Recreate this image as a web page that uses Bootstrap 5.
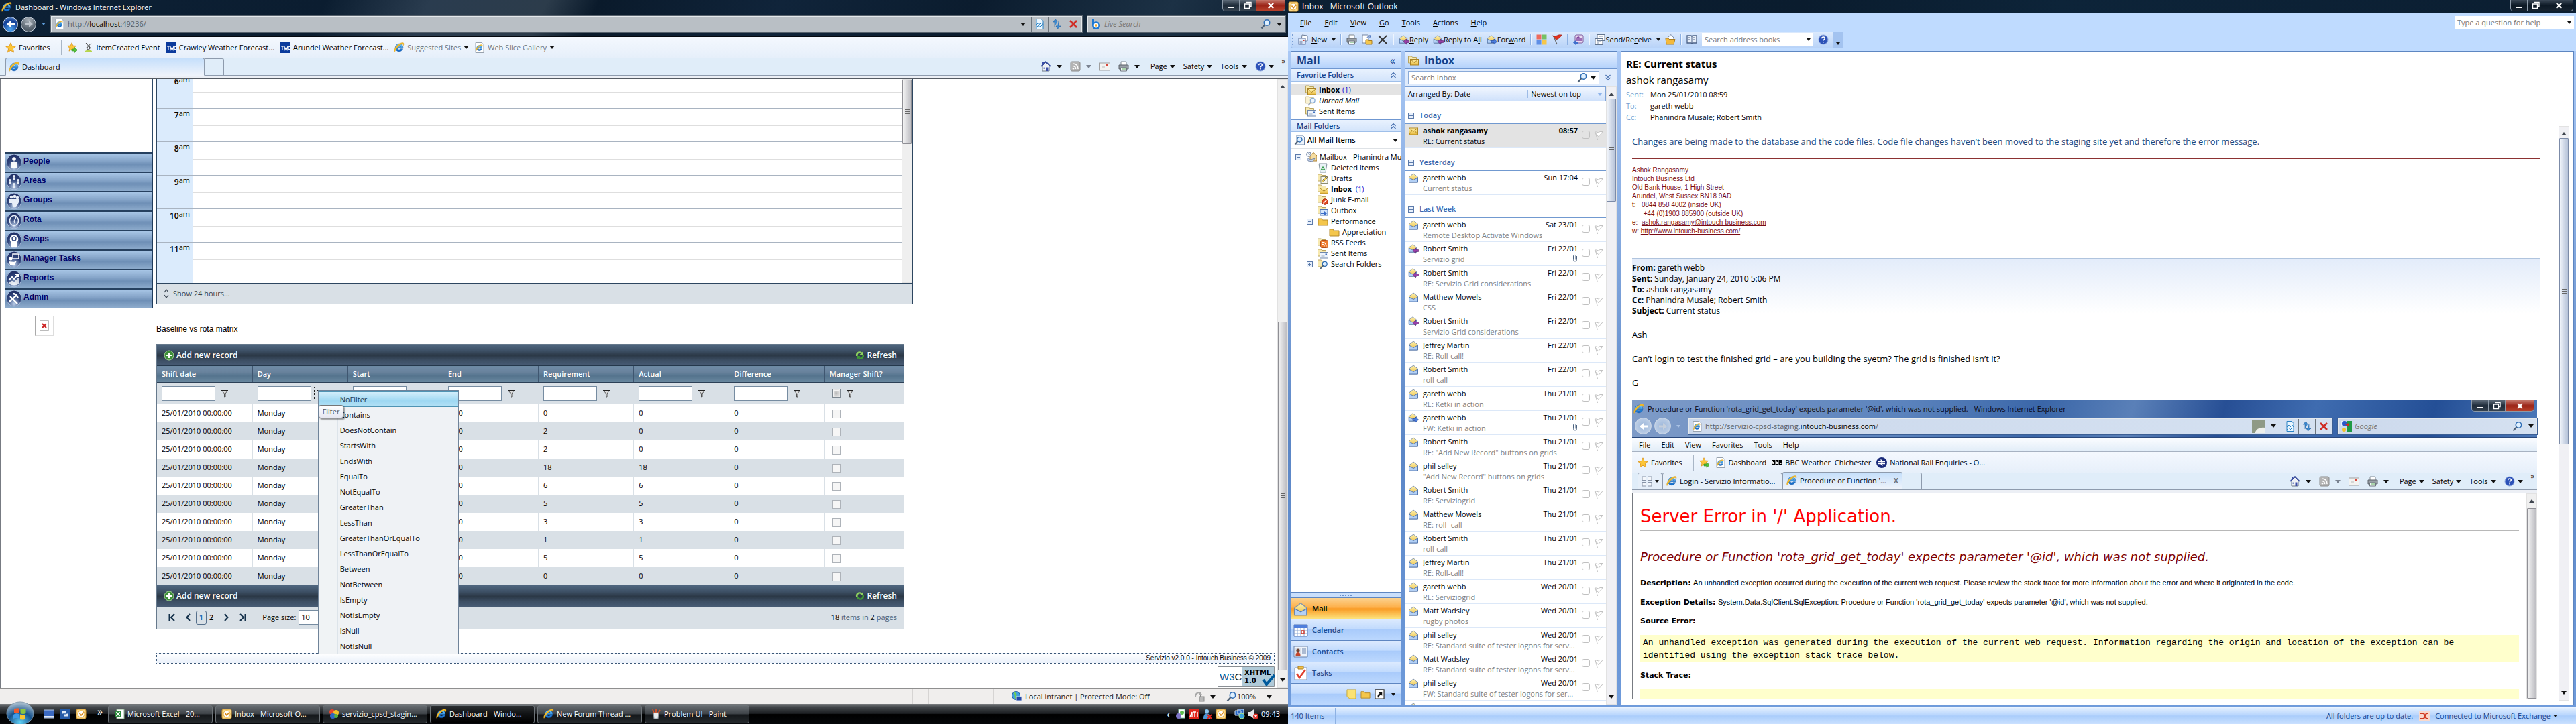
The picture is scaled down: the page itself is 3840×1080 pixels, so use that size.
<!DOCTYPE html>
<html lang="en">
<head>
<meta charset="utf-8">
<title>Desktop</title>
<meta name="viewport" content="width=device-width, initial-scale=1">
<link href="https://cdn.jsdelivr.net/npm/bootstrap@5.3.0/dist/css/bootstrap.min.css" rel="stylesheet">
<style>
  body{font:11px/16px "Open Sans","Noto Sans",sans-serif;color:#000;background:#fff;overflow:hidden}
  button,input,select{font:inherit;color:inherit}
  button,.tb{background:none;border:0;padding:0;display:inline-flex;align-items:center;white-space:nowrap;color:inherit;text-decoration:none}
  input{border-radius:0;min-width:0}
  input::placeholder{color:#777;opacity:1}
  .ic{width:16px;height:16px;flex:none;overflow:visible}
  .car{width:0;height:0;flex:none;border:4px solid transparent;border-top:5px solid #111;border-bottom:0}
  .car.dim{border-top-color:#7a8290}
  .car.sm{border-width:3px;border-top-width:4px;border-bottom:0}
  .carup{width:0;height:0;border:4px solid transparent;border-bottom:5px solid #40464f;border-top:0}
  .vsep{width:1px;align-self:stretch;flex:none}
  .clip{overflow:hidden;white-space:nowrap;text-overflow:ellipsis}
  .arial{font-family:"Liberation Sans",Arial,sans-serif}
  .verd{font-family:"DejaVu Sans",Verdana,sans-serif}
  .pane{min-width:0;min-height:0}

  /* glass title area */
  .chrome{background:linear-gradient(115deg,#0d2136 0,#0b1d30 25%,#2a3c4f 33%,#2c3c4b 42%,#0a1a2b 46%,#10243a 60%,#0b1c2e 75%,#1c3145 90%,#0d1f31 100%);height:55px;border-bottom:2px solid #05090f}
  .ttl{height:24px;color:#fff;gap:5px;padding-left:2px;padding-top:3px}
  .wctl{height:17px;border:1px solid #8d9aa8;border-top:0;border-radius:0 0 5px 5px;overflow:hidden;align-self:flex-start}
  .wctl button{width:25px;justify-content:center;background:linear-gradient(#5d6a78,#1e2b39 50%,#35424f);border-right:1px solid #8d9aa8}
  .wctl button:last-child{width:42px;border:0;background:linear-gradient(#c4776b,#9b2417 50%,#b8412b)}
  .addr{height:24px;background:#b9bfc5;border:1px solid #e5e9ec;outline:1px solid #56616c;color:#5a6066}
  .addr .gobtn{width:25px;height:22px;justify-content:center;border-left:1px solid #6d757d}
  .orb{width:23px;height:23px;border-radius:50%;border:1px solid #cfd9e6;justify-content:center}
  .orb.back{background:radial-gradient(circle at 50% 85%,#4fa5f0,#123f96 60%,#6f9bd6)}
  .orb.fwd{background:radial-gradient(circle at 50% 20%,#a8b0b8,#55606b 70%);border-top:1px solid #cfd9e6;padding:0}
  .favs{height:31px;background:linear-gradient(#f4f8fe,#e6effa)}
  .tabs{height:32px;background:#e0edf9;border-bottom:1px solid #555b63}
  .tabline{height:27px;border-bottom:1px solid #8e9bad}
  .tabon{height:27px;border:1px solid #8e9bad;border-bottom:1px solid #eef3fb;border-radius:3px 3px 0 0;background:linear-gradient(#c5dffb,#eef3fb)}
  .tabnew{width:29px;height:25px;border:1px solid #8e9bad;border-left:0;border-bottom:0;border-radius:0 3px 0 0;align-self:flex-end}
  .tabstrip{height:4px;background:#eceff5}
  .cmd{gap:12px}
  .cmd button{gap:4px}
  .cmd .wide{gap:8px}

  .sbar{width:16px;background:#efefef;border:1px solid #e2e2e2;flex:none}
  .thumb{background:linear-gradient(90deg,#f4f4f4,#d5d5d8 55%,#bdbdc2);border:1px solid #8f8f95;border-radius:1px}
  .grip{width:7px;height:8px;background:repeating-linear-gradient(#666 0 1px,transparent 1px 3px)}

  /* dashboard page */
  .page{border-left:2px solid #777b82}
  .side{width:221px;margin-left:5px;margin-right:5px}
  .sidebox{height:109px;border:1px solid #2d4a68;border-bottom:0;border-top:0}
  .sidemenu{border:1px solid #1f3c5c;border-top:0}
  .sidemenu a{height:29px;border-top:2px solid #26405f;background:linear-gradient(#a8c6e6,#86a5c9 40%,#6e8fb6 60%,#8dabcc);color:#000066;font-weight:bold;font-size:12px;line-height:23px;gap:2px;padding-left:1px;text-decoration:none}
  .sidemenu svg{width:24px;height:26px}
  .broken{width:28px;height:30px;border:1px solid #aaa;border-right-color:#ddd;border-bottom-color:#ddd;margin:11px 0 0 45px}
  .cal{max-width:1128px;border:1px solid #2d4660;border-top:0}
  .calview{height:304px;overflow:hidden}
  .hours{margin-top:-6px}
  .hour{height:50px;border-bottom:1px solid #a9b4c1}
  .hour .lab{width:54px;background:#dbebfc;border-right:1px solid #b4c6dc;font-weight:600;font-size:12px;padding:2px 4px 0 0;text-align:right}
  .hour sup{font-weight:400;font-size:11px;top:-3px}
  .hour .slot{background:linear-gradient(#dedede,#dedede) 0 25px/100% 1px no-repeat #fff}
  .calfoot{height:31px;background:#d9e0e6;border-top:1px solid #2d4660;color:#3b4148;padding-left:10px;gap:6px}
  .caption-line{font-size:12px;padding:29px 0 14px;margin:0}
  .rgrid{max-width:1115px;border:1px solid #66798c}
  .bar{height:32px;background:linear-gradient(#4f667f,#3d5065 30%,#2b3846 52%,#3c4e63 75%,#475b74);color:#fff;font-weight:600;font-size:12px;padding:0 10px}
  .bar.top-bar{height:31px}
  .bar button{gap:3px}
  .gtab{table-layout:fixed;width:100%;border-collapse:collapse}
  .gtab th{height:25px;padding:0 7px;color:#fff;font-weight:600;background:linear-gradient(#6f8ba6,#69839d 35%,#54738d 60%,#6a889f);border-left:1px solid #3f5670;border-bottom:1px solid #2c4056;border-top:1px solid #25384c}
  .gtab td{height:27px;padding:0 7px;border-left:1px solid #d9e0e6}
  .gtab tr>:first-child{border-left:0}
  .gtab .filt td{height:32px;background:#d9e0e6;border-bottom:1px solid #98aabb}
  .gtab tbody tr:nth-child(even) td{background:#d9e0e6}
  .gtab .filt input[type=text]{width:80px;height:22px;border:1px solid #768ca1;background:#fff}
  .gtab input[type=checkbox]{width:13px;height:13px;appearance:none;border:1px solid #aeb3b9;background:#f6f6f6;margin:0 0 0 3px;vertical-align:middle}
  .gtab .filt input[type=checkbox]{border-color:#7d8790;background:radial-gradient(#bbb,#f4f4f4);outline:1px solid #f4f4f4;outline-offset:-3px}
  .focus-dots{outline:1px dotted #222;outline-offset:3px}
  .fmenu{left:97px;top:11px;width:210px;border:1px solid #6f8399;background:linear-gradient(90deg,#f0f3f5 28px,#dde4ea 28px,#dde4ea 29px,#eff2f5 29px);z-index:5;padding:1px 0 0}
  .fmenu button{display:flex;height:23px;width:100%;padding-left:32px}
  .fmenu .hot{background:linear-gradient(#d5effb,#9ed8f2 60%,#b5e2f6);outline:1px solid #4f94b4;outline-offset:-1px;color:#1b3c58}
  .ftip{left:98px;top:33px;height:20px;padding:0 5px;border:1px solid #767676;border-radius:3px;background:linear-gradient(#fff,#e6e7f1);box-shadow:2px 2px 2px #0006;color:#575757;z-index:6;line-height:17px}
  .pager{height:33px;background:#d9e0e6;padding:0 10px 0 17px}
  .pg{width:16px;height:21px;justify-content:center;border:1px solid #56708c;border-radius:3px;color:#1664b0;font-weight:600}
  .psize{width:70px;height:22px;border:1px solid #768ca1;background:#fff;padding:0 3px;appearance:none}
  .foot{height:16px;margin-top:35px;border:1px dotted #3c5878;background:linear-gradient(#fff,#e9f0fa);font-size:10px;line-height:14px;padding-right:5px}
  .w3c{width:85px;height:31px;margin-top:4px}
  .stat{height:24px;background:#f0eeed;border-top:2px solid #8f8f8f;color:#222}
  .stat .vsep{background:#d6d4d3;margin-right:23px}
  .task{height:30px;background:linear-gradient(#7a7d80,#43474b 15%,#1a1d20 48%,#000 52%,#05070a);color:#fff;padding-left:65px;position:relative}
  .tbtn{width:156px;height:27px;border:1px solid #6d7378;border-radius:3px;background:linear-gradient(#666b70,#3d4247 48%,#14171a 52%,#24282c);padding-left:8px;gap:4px}
  .tbtn.act{background:linear-gradient(#2b2e31,#101214 48%,#000)}
  .start{position:absolute;left:9px;top:-4px}

  /* mail client */
  .ol{background:#bfdbff}
  .oltitle{height:20px;background:linear-gradient(90deg,#0c2034,#0a1c2e 40%,#0d2439 60%,#0b1e31);border-bottom:1px solid #c8d6e4;color:#fff;font-size:12px;gap:5px}
  .oltitle .wctl button,.oltitle .wctl button:last-child{background:linear-gradient(#3a4756,#0d1925 50%,#16222f)}
  .olmenu{height:27px;padding-left:18px;gap:19px}
  .oltools{height:25px;background:linear-gradient(#dceafd,#b8d3f8);border-bottom:1px solid #7fa3d8;border-radius:3px;gap:7px;padding:0 0 0 1px;margin-left:5px}
  .oltools .vsep{background:#8db1e3;margin:4px 0;border-right:1px solid #eef5ff;width:2px}
  .dots{width:2px;background:repeating-linear-gradient(#7ba0d6 0 2px,transparent 2px 5px)}
  .olbody{background:linear-gradient(#a9c8f5,#5b86c6 60%,#6f9bdb);padding:0 3px 3px 4px;gap:5px}
  .olpane{border:1px solid #5e86c1;background:#fff}
  .phead{height:26px;background:linear-gradient(#e6f0ff,#b4d2fb);border-bottom:1px solid #6f97d1;color:#15428b;font-weight:700;font-size:16px;flex:none}
  .sub{height:19px;background:linear-gradient(#e9f2fe,#d3e4fb);border-bottom:1px solid #9fbfe9;color:#15428b;font-weight:600;padding:0 6px 0 8px;flex:none}
  .frow{height:16px;gap:4px;white-space:nowrap}
  .fav-rows .frow{padding-left:21px}
  .fav-rows .frow:first-child{background:#e3e3e3}
  .blue{color:#1414d0}
  .pm{width:9px;height:9px;border:1px solid #5d7bab;background:linear-gradient(#5d7bab,#5d7bab) 1px 3px/5px 1px no-repeat,#e8f0fb;flex:none}
  .pm.plus{background:linear-gradient(#5d7bab,#5d7bab) 1px 3px/5px 1px no-repeat,linear-gradient(#5d7bab,#5d7bab) 3px 1px/1px 5px no-repeat,#e8f0fb}
  .navb{height:32px;border-top:1px solid #5e86c1;background:linear-gradient(#dceafe,#c2dbfd 45%,#a9cbfb 50%,#bcd8fe);color:#1f4a8f;font-weight:600;gap:6px;padding-left:3px}
  .navb.on{background:linear-gradient(#fbd28f,#fdb04a 45%,#f99a23 52%,#fde27c);color:#000}
  .navb svg{width:22px;height:22px}
  .navb .ic{width:15px;height:15px}
  .ghead{height:34px;border-bottom:2px solid #7199d0;color:#3c68ae;font-weight:600;padding:13px 0 0 4px;gap:8px}
  .mitem{height:36px;border-bottom:1px solid #dce8f8;padding:2px 3px 0 4px;gap:6px}
  .mitem.sel{background:#e3e3e3}
  .mitem .subj{color:#808080}
  .mitem.sel .subj{color:#000}
  .mitem .flagcol{gap:5px;padding-top:8px}
  .tick{width:12px;height:12px;appearance:none;border:1px solid #c1c1c1;border-radius:3px;margin:0}
  .olstat{height:25px;border-top:1px solid #eaf3ff;background:linear-gradient(#e1eefe,#bcd8fd 40%,#aacdfb 50%,#c9e0ff);color:#15428b}
  .sbar.blu{background:#f0f0f4}
  .blu .thumb{background:linear-gradient(90deg,#f0f4fa,#cdd6e6 55%,#b5c2d8);border-color:#7c8ba8}
  .reading{padding:7px 6px 6px 7px}
  .reading .subject{font-size:15px;line-height:22px;font-weight:700;margin:0}
  .reading .sender{font-size:15px;line-height:26px}
  .reading .meta{line-height:17px;border-bottom:1px solid #7f9cc4}
  .lbl{width:36px;color:#7b9fd0}
  .mbody{padding:0 27px 0 9px}
  .answer{color:#1f497d;font-size:13px;line-height:20px;padding:13px 0 15px;margin:0}
  .sig{color:#7a0c14;font-size:10px;line-height:13px;border-top:1px solid #8c3232;height:149px;padding-top:10px;white-space:pre}
  .sig a{color:inherit}
  .fwdhead{border-top:1px solid #b0c4de;background:linear-gradient(#e3ecfa,#fff 82px);font-size:12px;line-height:16px;padding-top:6px}
  .quoted{font-size:13px;line-height:18px;padding-top:18px}

  /* embedded browser window */
  .inner{margin:17px 5px 0 0}
  .inner .chrome{height:57px;background:linear-gradient(105deg,#7f9cc8 0,#5b83bd 30%,#3a66a8 45%,#5a80b8 55%,#274f95 65%,#3f6cb0 75%,#244f96 88%,#4c78b8);border-bottom:2px solid #29487c}
  .inner .ttl{color:#0a0a14;height:26px;padding-top:0}
  .inner .addr{background:linear-gradient(90deg,#ccd9ec,#d5e1f1);outline-color:#3c5f94}
  .inner .orb{width:25px;height:25px;background:radial-gradient(circle,#9db7da,#c7d6ea)}
  .imenu{height:20px;background:linear-gradient(#fafcff,#e2edf8);border-bottom:1px solid #a7b2c2;padding-left:10px;gap:16px}
  .inner .favs{height:32px}
  .inner .tabs{height:30px}
  .inner .tabline{height:25px}
  .itab{width:179px;height:25px;border:1px solid #8e9bad;border-bottom:0;border-radius:3px 3px 0 0;background:#e6eff9;padding:0 5px;gap:4px}
  .inner .tabon{width:179px;gap:4px;padding:0 5px;height:26px}
  .iview{border-left:2px solid #777b82;height:307px;overflow:hidden}
  .err{padding:0 11px 0 10px}
  .err h1{font-size:26px;line-height:30px;color:#f00;font-weight:400;border-bottom:1px solid #b8b8b8;padding:19px 0 6px;margin:0}
  .err h2{font-size:18px;line-height:24px;color:#800000;font-style:italic;font-weight:400;margin:27px 0 18px}
  .err p{margin:0 0 12px}
  .err pre{background:#ffffcc;font:13px/19px "Liberation Mono","Courier New",monospace;padding:2px 4px;margin:0 0 12px;height:41px;overflow:hidden}
</style>
</head>
<body>

<svg width="0" height="0" class="position-absolute" aria-hidden="true">
  <defs>
    <linearGradient id="gIe" x1="0" y1="0" x2="0" y2="1"><stop offset="0" stop-color="#6fd0ff"/><stop offset="1" stop-color="#0b62c4"/></linearGradient>
    <linearGradient id="gYel" x1="0" y1="0" x2="0" y2="1"><stop offset="0" stop-color="#fff3b0"/><stop offset="1" stop-color="#e8b93c"/></linearGradient>
    <radialGradient id="gOrb" cx=".5" cy=".85" r=".8"><stop offset="0" stop-color="#bcd0ea"/><stop offset=".55" stop-color="#34497f"/><stop offset="1" stop-color="#1f2f66"/></radialGradient>
    <radialGradient id="gStart" cx=".5" cy=".9" r=".9"><stop offset="0" stop-color="#5fd0f5"/><stop offset=".5" stop-color="#16528c"/><stop offset="1" stop-color="#b8c9d6"/></radialGradient>
  </defs>
  <symbol id="ie" viewBox="0 0 16 16"><path d="M8 2.2a5.8 5.8 0 1 0 5.6 7.6h-3.3a2.6 2.6 0 0 1-4.8-1.1h8.4C14 4.800 11.500 2.200 8 2.200zM5.600 6.700a2.500 2.500 0 0 1 4.900 0z" fill="url(#gIe)" stroke="#0a4fa3" stroke-width=".5"/><path d="M1 14.500C-.5 12.500 2 7 6.500 3.500S14.500-.2 15 2c.2 1-.2 2-.8 3 .2-1.500-.4-2.400-1.800-2.300-2 .2-5.400 2.800-7.600 5.900S2 14 1 14.500z" fill="#f4bd2a" stroke="#c98c10" stroke-width=".3"/></symbol>
  <symbol id="pageie" viewBox="0 0 16 16"><path d="M2 .5h9l3 3v12H2z" fill="#fff" stroke="#98a2ae"/><use href="#ie" x="2" y="3" width="11" height="11"/></symbol>
  <symbol id="star" viewBox="0 0 16 16"><path d="M8 .8l2.100 4.900 5.200.5-3.900 3.500 1.200 5.300L8 12.200 3.400 15l1.200-5.300L.7 6.200l5.200-.5z" fill="#fcc63a" stroke="#d88c12" stroke-width=".8"/></symbol>
  <symbol id="staradd" viewBox="0 0 16 16"><use href="#star" width="14" height="14"/><path d="M7 10h4V7.500l4.500 4L11 15.500V13H7z" fill="#57c23c" stroke="#23861a" stroke-width=".6"/></symbol>
  <symbol id="bird" viewBox="0 0 16 16"><path d="M4 1l7 8M12 1L5 9M8 5a3 3 0 0 0-2 5c1.500 1.400 3.500.8 4-1s-1-3-2-4z" fill="none" stroke="#444"/><path d="M3 13c3-2 7-2 10 0v2H3z" fill="#b7d44d"/></symbol>
  <symbol id="twc" viewBox="0 0 16 16"><path d="M0 0h16v16H0z" fill="#0a3a9c"/><path d="M2 6h4M4 6v5M7 6l1 5 1.500-4L11 11l.8-5M15 6.500c-3-1-3 5 0 4" stroke="#fff" fill="none" stroke-width="1.100"/></symbol>
  <symbol id="home" viewBox="0 0 16 16"><path d="M3 7v8h10V7L8 2z" fill="#eef1f6" stroke="#6b7686"/><path d="M1 8l7-7 7 7" fill="none" stroke="#3046a0" stroke-width="1.600"/><path d="M8.500 9.500h3V15h-3z" fill="#3c4fa8"/><path d="M4.500 9.500h2.500v2.500H4.500z" fill="#7f93c8"/><path d="M3 1h2v4l-2 2z" fill="#3c4fa8"/></symbol>
  <symbol id="rss" viewBox="0 0 16 16"><rect x="1" y="1" width="14" height="14" rx="2" fill="#b3b3b3" stroke="#8a8a8a"/><path d="M4 4c5 0 8 3 8 8M4 7.500c3 0 4.500 1.500 4.500 4.500" fill="none" stroke="#fff" stroke-width="1.500"/><circle cx="5" cy="11.200" r="1.200" fill="#fff"/></symbol>
  <symbol id="env" viewBox="0 0 16 16"><rect x=".5" y="3" width="15" height="11" fill="#f3f3f1" stroke="#a0a0a0"/><path d="M10 5h3v2.500h-3z" fill="#d9463a"/><path d="M3 9h5" stroke="#b9b9b9"/></symbol>
  <symbol id="print" viewBox="0 0 16 16"><path d="M4 1h8v6H4z" fill="#fff" stroke="#808890"/><path d="M1 6h14v6H1z" fill="#9aa0a8" stroke="#5c636b"/><path d="M3.500 10h9v5h-9z" fill="#f6f8fa" stroke="#6c747c"/><path d="M5 12h6" stroke="#5cb05c"/></symbol>
  <symbol id="help" viewBox="0 0 16 16"><circle cx="8" cy="8" r="7" fill="#2d52b8" stroke="#8aa4dc"/><path d="M5.700 6.200c.2-3 5-2.700 4.600 0-.2 1.500-2.200 1.500-2.200 3.300M8.100 11v1.600" fill="none" stroke="#fff" stroke-width="1.500"/></symbol>
  <symbol id="mag" viewBox="0 0 16 16"><circle cx="9.500" cy="6" r="4.200" fill="#dff0ff" stroke="#2d6cb5" stroke-width="1.600"/><path d="M6.500 9L1.500 14.500" stroke="#4c5f75" stroke-width="2.200"/></symbol>
  <symbol id="compat" viewBox="0 0 16 16"><path d="M3 .5h7l3 3v12H3z" fill="#eaf6ff" stroke="#2b82c4"/><path d="M3 9l3-3 2 3 3-3 2 3M3 13l3-3 2 3 3-3" fill="none" stroke="#2b82c4"/></symbol>
  <symbol id="reload" viewBox="0 0 16 16"><path d="M5 12V5H2l4.500-4L9 5" fill="#3d8ad0" stroke="#1f5d9c" stroke-width=".6"/><path d="M11 4v7h3l-4.500 4L7 11h2" fill="#3d8ad0" stroke="#1f5d9c" stroke-width=".6"/></symbol>
  <symbol id="stop" viewBox="0 0 16 16"><path d="M3 3l10 10M13 3L3 13" stroke="#cf2d25" stroke-width="2.600"/></symbol>
  <symbol id="bing" viewBox="0 0 16 16"><path d="M2 1v9a6 6 0 1 0 3-5V1z" fill="#1e78d2"/><circle cx="8" cy="10" r="3.400" fill="#fff"/><circle cx="8" cy="10" r="1.800" fill="#f7a51c"/></symbol>
  <symbol id="min" viewBox="0 0 12 12"><path d="M2 8h8v2H2z" fill="#fff"/></symbol>
  <symbol id="rest" viewBox="0 0 12 12"><path d="M4 1.500h7v6H9M1.500 4h7v6.500h-7z" fill="none" stroke="#fff" stroke-width="1.400"/></symbol>
  <symbol id="cls" viewBox="0 0 12 12"><path d="M2 2l8 8M10 2l-8 8" stroke="#fff" stroke-width="2.200"/></symbol>
  <symbol id="arrL" viewBox="0 0 16 16"><path d="M14 6.500H8V3L2 8l6 5V9.500h6z" fill="#fff"/></symbol>
  <symbol id="arrR" viewBox="0 0 16 16"><path d="M2 6.500h6V3l6 5-6 5V9.500H2z" fill="#d0d6dc" opacity=".75"/></symbol>
  <symbol id="funnel" viewBox="0 0 12 12"><path d="M1.500 1.500h9L7 6v5H5.500V6z" fill="#ddd" stroke="#444" stroke-width=".9"/><path d="M1 1.500h10" stroke="#222"/></symbol>
  <symbol id="plus" viewBox="0 0 16 16"><circle cx="8" cy="8" r="7" fill="#3f8f3a" stroke="#a8d69a"/><path d="M8 4v8M4 8h8" stroke="#fff" stroke-width="2"/></symbol>
  <symbol id="rfr" viewBox="0 0 16 16"><path d="M2 9C1 3 7 .5 11 3.500L13 1.500V7H7.500L9.300 5.200C7 3.500 4.200 5 4.500 9z" fill="#8ed15e"/><path d="M14 7c1 6-5 8.500-9 5.500L3 14.500V9h5.500l-1.800 1.800C9 12.500 11.800 11 11.500 7z" fill="#3f9b35"/></symbol>
  <symbol id="chv" viewBox="0 0 8 16"><path d="M1 6l3-4 3 4M1 10l3 4 3-4" fill="none" stroke="#38434f" stroke-width="1.200"/></symbol>
  <symbol id="o1" viewBox="0 0 24 26"><ellipse cx="12" cy="13" rx="11" ry="12" fill="url(#gOrb)" stroke="#a9bddb"/><circle cx="12" cy="8" r="2.800" fill="#fff"/><path d="M8 22v-9q4-3 8 0v9z" fill="#fff" opacity=".95"/></symbol>
  <symbol id="o2" viewBox="0 0 24 26"><ellipse cx="12" cy="13" rx="11" ry="12" fill="url(#gOrb)" stroke="#a9bddb"/><g fill="#e8eef8"><circle cx="12" cy="5" r="2"/><path d="M10 7h4v3h-4z"/><circle cx="6" cy="11" r="2"/><path d="M4 13h4v4H4z"/><circle cx="18" cy="11" r="2"/><path d="M16 13h4v4h-4z"/><circle cx="12" cy="17" r="2"/><path d="M10 19h4v4h-4z"/></g></symbol>
  <symbol id="o3" viewBox="0 0 24 26"><ellipse cx="12" cy="13" rx="11" ry="12" fill="url(#gOrb)" stroke="#a9bddb"/><g fill="#e8eef8"><circle cx="8" cy="7" r="2.300"/><circle cx="13" cy="6" r="2.300"/><circle cx="17" cy="8" r="2.300"/><path d="M5 10h14v5l-4 7h-5l-1-6H5z"/></g></symbol>
  <symbol id="o4" viewBox="0 0 24 26"><ellipse cx="12" cy="13" rx="11" ry="12" fill="url(#gOrb)" stroke="#a9bddb"/><ellipse cx="12" cy="13" rx="6.500" ry="7.500" fill="none" stroke="#e8eef8" stroke-width="1.600"/><path d="M12 14l3-6M12 14l2 3" stroke="#e8eef8" stroke-width="1.500"/></symbol>
  <symbol id="o5" viewBox="0 0 24 26"><ellipse cx="12" cy="13" rx="11" ry="12" fill="url(#gOrb)" stroke="#a9bddb"/><path d="M8 23v-6c-5-5-1-12 4-12s9 7 4 12v6z" fill="#fff"/><circle cx="12" cy="11" r="3" fill="none" stroke="#34497f" stroke-width="1.400"/></symbol>
  <symbol id="o6" viewBox="0 0 24 26"><ellipse cx="12" cy="13" rx="11" ry="12" fill="url(#gOrb)" stroke="#a9bddb"/><path d="M10 5h9v7h-9z" fill="none" stroke="#fff" stroke-width="1.500"/><circle cx="7" cy="12" r="2.500" fill="#fff"/><path d="M4 16l8 1 4-2-3 6H6z" fill="#fff"/></symbol>
  <symbol id="o7" viewBox="0 0 24 26"><ellipse cx="12" cy="13" rx="11" ry="12" fill="url(#gOrb)" stroke="#a9bddb"/><path d="M4 15l5-5 3 3 5-6M14 6h4v4" fill="none" stroke="#fff" stroke-width="2"/><path d="M6 21v-4M9 22v-6M12 22v-5M15 22v-8M18 20v-9" stroke="#fff" stroke-width="1.500"/></symbol>
  <symbol id="o8" viewBox="0 0 24 26"><ellipse cx="12" cy="13" rx="11" ry="12" fill="url(#gOrb)" stroke="#a9bddb"/><path d="M5 18L15 9M10 6q6 0 8 7M6 10l11 11" fill="none" stroke="#fff" stroke-width="2.400"/></symbol>
  <symbol id="fold" viewBox="0 0 16 16"><path d="M1 4h5l1.500 2H15v8H1z" fill="#f4c64b" stroke="#b58a2b"/></symbol>
  <symbol id="foldback" viewBox="0 0 16 16"><path d="M.5 2h5l1 1.500h6V12H.5z" fill="#f7e9b0" stroke="#b9a45e"/></symbol>
  <symbol id="inbox" viewBox="0 0 16 16"><use href="#foldback"/><rect x="3.500" y="6.500" width="12" height="8.500" fill="url(#gYel)" stroke="#a98224"/><path d="M3.500 6.500l6 5 6-5" fill="none" stroke="#a98224"/></symbol>
  <symbol id="sent" viewBox="0 0 16 16"><use href="#foldback"/><rect x="3.500" y="6.500" width="12" height="8.500" fill="#eef4fc" stroke="#7088ac"/><path d="M11.500 8.500h2.500v2h-2.500z" fill="#4374c0"/><path d="M5.500 12h5" stroke="#9aaac0"/></symbol>
  <symbol id="unread" viewBox="0 0 16 16"><g opacity=".55"><use href="#foldback"/><use href="#mag" x="3" y="3" width="13" height="13"/></g></symbol>
  <symbol id="sfold" viewBox="0 0 16 16"><use href="#foldback"/><use href="#mag" x="3" y="3" width="13" height="13"/></symbol>
  <symbol id="drafts" viewBox="0 0 16 16"><use href="#foldback"/><rect x="5" y="5.500" width="10" height="10" fill="#f6f6ee" stroke="#8d8d70"/><path d="M6 14l1-3 6-6 2 2-6 6z" fill="#f2d25a" stroke="#444" stroke-width=".7"/></symbol>
  <symbol id="junk" viewBox="0 0 16 16"><use href="#foldback"/><circle cx="11" cy="11" r="4.300" fill="#e24a24" stroke="#a92d10"/><path d="M8.500 13.500l5-5" stroke="#fff" stroke-width="1.400"/></symbol>
  <symbol id="outb" viewBox="0 0 16 16"><use href="#foldback"/><rect x="4" y="6.500" width="11" height="8.500" fill="#d6e6fb" stroke="#4e74b4"/><path d="M5 11.500h5V9l4 3.200-4 3V13H5z" fill="#3a6cc8"/></symbol>
  <symbol id="feeds" viewBox="0 0 16 16"><use href="#foldback"/><rect x="4.500" y="4.500" width="11" height="11" rx="2" fill="#ee7a2b" stroke="#b9501a"/><path d="M7 7.500c4 0 6 2 6 6M7 10.500c2 0 3 1 3 3" fill="none" stroke="#fff" stroke-width="1.300"/></symbol>
  <symbol id="bin" viewBox="0 0 16 16"><path d="M2 2h12l-2 13H4z" fill="#e9f2f6" stroke="#7b8b98"/><path d="M5.500 11l2.500-4 2.500 4z" fill="none" stroke="#2d9a43" stroke-width="1.400"/></symbol>
  <symbol id="mbox" viewBox="0 0 16 16"><path d="M6 6l5-4.500 5 4.500v8H6z" fill="#f5dca0" stroke="#a97d2c"/><circle cx="4" cy="4" r="3.300" fill="#f2f6fb" stroke="#5e7394"/><path d="M4 2v2h2" stroke="#5e7394" fill="none"/><path d="M1 9l6 3 6-2-3 5-7-1z" fill="#c6d4ee" stroke="#5e7394" stroke-width=".7"/></symbol>
  <symbol id="allm" viewBox="0 0 16 16"><path d="M4 1h9l2.500 3v11H4z" fill="#eef4fb" stroke="#6f86a8"/><use href="#mag" x="0" y="2" width="14" height="14"/></symbol>
  <symbol id="mopen" viewBox="0 0 16 16"><path d="M1.500 7L8 2l6.500 5v8h-13z" fill="url(#gYel)" stroke="#8394ac"/><path d="M1.500 15V8L8 11.500 14.500 8v7z" fill="#b3d0f5" stroke="#5478b0"/></symbol>
  <symbol id="mclosed" viewBox="0 0 16 16"><rect x="1.500" y="4" width="13" height="10" fill="url(#gYel)" stroke="#b18a22"/><path d="M1.500 4L8 9.500 14.500 4M1.500 14l4.500-6M14.500 14L10 8" fill="none" stroke="#b18a22"/></symbol>
  <symbol id="mreply" viewBox="0 0 16 16"><use href="#mopen" width="14" height="14"/><path d="M15.500 9.500h-4V7L7 11l4.500 4v-2.500h4z" fill="#9a3fa8" stroke="#5e1d6b" stroke-width=".6"/></symbol>
  <symbol id="mfwd" viewBox="0 0 16 16"><use href="#mopen" width="14" height="14"/><path d="M7 9.500h4V7l4.500 4-4.500 4v-2.500H7z" fill="#4d7fe0" stroke="#1d3f96" stroke-width=".6"/></symbol>
  <symbol id="flg" viewBox="0 0 16 16"><path d="M2 2h3q3 2 5-.5h4l-2.500 3.500-4 3.500zM3 2l3.500 12" fill="#fff" stroke="#c3c3c3"/></symbol>
  <symbol id="rflag" viewBox="0 0 16 16"><path d="M1 2q4 2 7 0t7-1q-2 5-8 7z" fill="#e2301e" stroke="#951a0e" stroke-width=".6"/><path d="M3 3l5 12" stroke="#666" stroke-width="1.300"/></symbol>
  <symbol id="clipi" viewBox="0 0 8 12"><path d="M6.500 3v5.500a2.500 2.500 0 0 1-5 0v-6a2 2 0 0 1 3.500 0V8.500" fill="none" stroke="#4d6482"/></symbol>
  <symbol id="newm" viewBox="0 0 16 16"><path d="M6 1l8 1v8H5z" fill="#fff" stroke="#6b7d98"/><rect x="1" y="6" width="10" height="9" fill="#dfe9f8" stroke="#5c719a"/><path d="M7 8h2.500v2H7z" fill="#c8392e"/><path d="M2.500 11h4M2.500 13h4" stroke="#5c719a"/></symbol>
  <symbol id="movef" viewBox="0 0 16 16"><path d="M1 1h9v12H1z" fill="#fff" stroke="#7486a5"/><path d="M6 8h3.500l1 1.500H15V15H6z" fill="#f4c64b" stroke="#a97d20"/><path d="M8 6q0-4 5-3M11.500 1l2 2-2 2" fill="none" stroke="#2b59b0"/></symbol>
  <symbol id="xdel" viewBox="0 0 16 16"><path d="M2 2l12 12M14 2L2 14" stroke="#333" stroke-width="1.800"/></symbol>
  <symbol id="cats" viewBox="0 0 16 16"><path d="M.5.500h7v7h-7z" fill="#ee6a5c"/><path d="M8.500.500h7v7h-7z" fill="#76c064"/><path d="M.5 8.500h7v7h-7z" fill="#5f8fe6"/><path d="M8.500 8.500h7v7h-7z" fill="#f6c648"/></symbol>
  <symbol id="onen" viewBox="0 0 16 16"><rect x="3" y="1" width="12" height="12" rx="2" fill="#eadcf2" stroke="#7e5a9c"/><path d="M6 10V5q3-2 3 0v5M12 5v5" fill="none" stroke="#7e3f9c" stroke-width="1.400"/><path d="M8 11H4V9l-4 3.500L4 16v-2h4z" fill="#3f6fcc"/></symbol>
  <symbol id="sr" viewBox="0 0 16 16"><path d="M4 .5h11v9H4zM1 6.500h11v9H1z" fill="#fff" stroke="#62758f"/><path d="M3 9h7M3 11h7M3 13h4M6 3h7" stroke="#7f90aa"/></symbol>
  <symbol id="opn" viewBox="0 0 16 16"><path d="M4 5l5-4.500L13 5v6H4z" fill="#fff" stroke="#7486a5"/><path d="M1 6h4l1 1.500h9L13 15H2z" fill="#f4b93b" stroke="#a97d20"/></symbol>
  <symbol id="book" viewBox="0 0 16 16"><path d="M1 2h6l1 1 1-1h6v11H9l-1 1-1-1H1z" fill="#e8eff9" stroke="#4b6187" stroke-width="1.300"/><path d="M8 3v11M3 5h3M3 8h3M10 5h3M10 8h3" stroke="#4b6187"/></symbol>
  <symbol id="cale" viewBox="0 0 22 22"><path d="M1 3h20v17H1z" fill="#fff" stroke="#5a79b4"/><path d="M1 3h20v5H1z" fill="#4f7fdc"/><path d="M1 12h20M1 16h20M6 8v12M11 8v12M16 8v12" stroke="#8fa8d2"/><path d="M12 12h4v4h-4z" fill="none" stroke="#d23b2c" stroke-width="1.400"/></symbol>
  <symbol id="cont" viewBox="0 0 22 22"><path d="M1 3h20v16H1z" fill="#eef3fa" stroke="#6b83ab"/><path d="M3 5h8v12H3z" fill="#d9dfe8"/><circle cx="7" cy="9" r="2.600" fill="#6e4434"/><path d="M3.500 17q0-5 3.500-5t3.500 5z" fill="#c2452c"/><path d="M13 7h6M13 10h6M13 13h6" stroke="#6b83ab"/></symbol>
  <symbol id="tsk" viewBox="0 0 22 22"><path d="M2 3h18v18H2z" fill="#fff" stroke="#8a98b0"/><path d="M7 1h8v4H7z" fill="#f3c34a" stroke="#a97d20"/><path d="M5 12l4 6 9-12" fill="none" stroke="#e0402e" stroke-width="2.600"/></symbol>
  <symbol id="note" viewBox="0 0 16 16"><path d="M1 1h14v14H5l-4-4z" fill="#fbe274" stroke="#c4a32f"/></symbol>
  <symbol id="shortc" viewBox="0 0 16 16"><path d="M1 1h14v14H1z" fill="#fff" stroke="#333" stroke-width="1.300"/><path d="M5 13q-1-5 3-6L6.500 5H12v5.500L10.500 9Q7 9.500 7 13z" fill="#111"/></symbol>
  <symbol id="olk" viewBox="0 0 16 16"><rect x="1" y="1" width="14" height="14" rx="2" fill="#f9d889" stroke="#d99a2a"/><circle cx="8" cy="8" r="5" fill="#fff" stroke="#e0a83a"/><path d="M5.500 6.500L8 10l4-4.500" fill="none" stroke="#d98a17" stroke-width="1.600"/></symbol>
  <symbol id="xls" viewBox="0 0 16 16"><path d="M4 1h11v14H4z" fill="#fff" stroke="#8bb08b"/><rect x="1" y="3" width="10" height="10" fill="#2c8a3c"/><path d="M3.500 5l5 6M8.500 5l-5 6" stroke="#fff" stroke-width="1.500"/></symbol>
  <symbol id="svz" viewBox="0 0 16 16"><circle cx="5" cy="5" r="4" fill="#e4452c"/><circle cx="11" cy="6" r="4" fill="#f4bf2a"/><circle cx="6" cy="11" r="4" fill="#2f66c4"/><circle cx="11" cy="11" r="3" fill="#52ad42"/></symbol>
  <symbol id="pnt" viewBox="0 0 16 16"><path d="M4 6h8l-1 9H5z" fill="#e8ecef" stroke="#8a929a"/><path d="M5 7L3 1M8 7V1M11 7l3-5" stroke="#d8542c" stroke-width="1.800"/></symbol>
  <symbol id="dsk" viewBox="0 0 16 16"><path d="M.5 2h15v12H.5z" fill="#3a69c2" stroke="#b9cbe6"/><path d="M1 11h14v2.500H1z" fill="#dfe7f4"/></symbol>
  <symbol id="swt" viewBox="0 0 16 16"><path d="M.5.500h15v15H.5z" fill="#245aa8" stroke="#9fbbe0"/><path d="M3 3h7v5H3zM6 7h7v5H6z" fill="#dfeaf8" stroke="#245aa8"/></symbol>
  <symbol id="glb" viewBox="0 0 16 16"><circle cx="6.500" cy="6.500" r="6" fill="#3f9ee0" stroke="#1f5d9c"/><path d="M3 3q4 0 3 4t3 3" stroke="#6fcf54" stroke-width="2.600" fill="none"/><path d="M7 8h8v6H7z" fill="#2347a8" stroke="#cfd9ea"/></symbol>
  <symbol id="lock" viewBox="0 0 16 16"><path d="M2 8Q2 2 9 2v3" fill="none" stroke="#a8a8a8" stroke-width="2"/><rect x="8" y="8" width="7" height="7" fill="#b8b8b8" stroke="#8a8a8a"/><path d="M9.500 8V6q2-2 4 0v2" fill="none" stroke="#8a8a8a"/></symbol>
  <symbol id="ati" viewBox="0 0 16 16"><path d="M0 0h16v16H0z" fill="#e0261b"/><path d="M2 12l3-7v7M7 5h4M9 5v7M13 5v7" stroke="#fff" stroke-width="1.400" fill="none"/></symbol>
  <symbol id="tr1" viewBox="0 0 16 16"><path d="M5 1h9v13H5z" fill="#fff" stroke="#9db"/><circle cx="10" cy="6" r="3" fill="#5cbf4f"/><circle cx="5" cy="11" r="4" fill="#7d75c9"/></symbol>
  <symbol id="per" viewBox="0 0 16 16"><circle cx="7" cy="4" r="3" fill="#8ac6ef"/><path d="M2 15q0-8 5-8t5 8z" fill="#4c97d4"/><path d="M8 9l6 6M14 9l-6 6" stroke="#e02a20" stroke-width="2"/></symbol>
  <symbol id="net" viewBox="0 0 16 16"><path d="M1 3h9v7H1zM5 1h9v7H5z" fill="#2766c0" stroke="#d5e2f2"/><circle cx="11" cy="11" r="4" fill="#38a1dc" stroke="#a6e08a"/></symbol>
  <symbol id="spk" viewBox="0 0 16 16"><path d="M1 5h3l5-4v14l-5-4H1z" fill="#e3e6e9"/><circle cx="12" cy="11.500" r="4" fill="#dd2a20"/><path d="M10.500 10l3 3M13.500 10l-3 3" stroke="#fff" stroke-width="1.200"/></symbol>
  <symbol id="xch" viewBox="0 0 16 16"><path d="M0 1h16v14H0z" fill="#f8d9cc"/><path d="M2 4h5l4 8h3M2 12h5l4-8h3" fill="none" stroke="#cf3a20" stroke-width="2"/></symbol>
  <symbol id="bbc" viewBox="0 0 16 16"><path d="M0 4h5v7H0zM5.500 4h5v7h-5zM11 4h5v7h-5z" fill="#000"/><path d="M1.500 5.500v4h2v-2h-2M7 5.500v4h2v-2H7M14.500 5.500h-2v4h2" stroke="#fff" stroke-width=".9" fill="none"/></symbol>
  <symbol id="rail" viewBox="0 0 16 16"><circle cx="8" cy="8" r="8" fill="#1a2a7a"/><path d="M3 6.500h10M3 9.500h10M6.500 3.500l3 3-3 3 3 3" stroke="#fff" stroke-width="1.300" fill="none"/></symbol>
  <symbol id="ggl" viewBox="0 0 16 16"><path d="M0 0h8v8H0z" fill="#e7f0fb"/><path d="M8 0h8v16H8z" fill="#1f9a45"/><circle cx="5" cy="4" r="4" fill="#2a58c8"/><circle cx="4" cy="13" r="3" fill="#f3c22c"/><path d="M6 5l6-2v6z" fill="#d8281e"/></symbol>
  <symbol id="qtab" viewBox="0 0 16 16"><path d="M1 1h5.500v5.500H1zM9.500 1H15v5.500H9.500zM1 9.500h5.500V15H1zM9.500 9.500H15V15H9.500z" fill="#f4f7fb" stroke="#8793a6"/></symbol>
  <symbol id="dblup" viewBox="0 0 10 10"><path d="M1.500 5L5 1.500 8.500 5M1.500 9L5 5.500 8.500 9" fill="none" stroke="#3f69ab" stroke-width="1.200"/></symbol>
  <symbol id="dbldn" viewBox="0 0 10 10"><path d="M1.500 1L5 4.500 8.500 1M1.500 5L5 8.500 8.500 5" fill="none" stroke="#3f69ab" stroke-width="1.200"/></symbol>
</svg>

<template id="cmdTpl">
  <button class="wide" aria-label="Home"><svg class="ic"><use href="#home"/></svg><i class="car"></i></button>
  <button class="wide" aria-label="Feeds"><svg class="ic"><use href="#rss"/></svg><i class="car dim"></i></button>
  <button aria-label="Read mail"><svg class="ic"><use href="#env"/></svg></button>
  <button class="wide" aria-label="Print"><svg class="ic"><use href="#print"/></svg><i class="car"></i></button>
  <button class="ms-1">Page<i class="car"></i></button>
  <button>Safety<i class="car"></i></button>
  <button>Tools<i class="car"></i></button>
  <button aria-label="Help"><svg class="ic"><use href="#help"/></svg><i class="car"></i></button>
  <button class="pb-3" aria-label="More">»</button>
</template>

<div class="d-flex vh-100">

<!-- ============ Browser + taskbar ============ -->
<main class="w-50 d-flex flex-column pane">
  <header class="chrome flex-shrink-0">
    <div class="d-flex">
      <div class="ttl d-flex align-items-start flex-grow-1"><svg class="ic"><use href="#ie"/></svg><span>Dashboard - Windows Internet Explorer</span></div>
      <div class="wctl d-flex me-1"><button aria-label="Minimize"><svg width="12" height="12"><use href="#min"/></svg></button><button aria-label="Restore"><svg width="12" height="12"><use href="#rest"/></svg></button><button aria-label="Close"><svg width="11" height="11"><use href="#cls"/></svg></button></div>
    </div>
    <div class="d-flex align-items-center px-1">
      <button class="orb back" aria-label="Back"><svg class="ic"><use href="#arrL"/></svg></button>
      <button class="orb fwd ms-1" aria-label="Forward"><svg class="ic"><use href="#arrR"/></svg></button>
      <i class="car sm ms-2" style="border-top-color:#5d9bd8"></i>
      <div class="addr d-flex align-items-center flex-grow-1 ms-2 ps-1">
        <svg class="ic"><use href="#pageie"/></svg><span class="ms-1 flex-grow-1">http://<span class="text-black">localhost</span>:49236/</span>
        <i class="car me-1"></i>
        <button class="gobtn ms-1" aria-label="Compatibility"><svg class="ic"><use href="#compat"/></svg></button>
        <button class="gobtn" aria-label="Refresh"><svg class="ic"><use href="#reload"/></svg></button>
        <button class="gobtn" aria-label="Stop"><svg class="ic"><use href="#stop"/></svg></button>
      </div>
      <div class="addr d-flex align-items-center ms-2 ps-1" style="width:295px">
        <svg class="ic"><use href="#bing"/></svg>
        <input class="border-0 bg-transparent flex-grow-1 ms-1 p-0 fst-italic" type="text" placeholder="Live Search" aria-label="Live Search">
        <svg class="ic me-2"><use href="#mag"/></svg><i class="car me-1"></i>
      </div>
    </div>
  </header>

  <nav class="favs d-flex align-items-center flex-shrink-0 ps-2">
    <a class="tb" href="#"><svg class="ic me-1"><use href="#star"/></svg>Favorites</a>
    <i class="vsep my-1 ms-3 me-2" style="background:#a9b6c6"></i>
    <button aria-label="Add to favorites"><svg class="ic me-2"><use href="#staradd"/></svg></button>
    <a class="tb" href="#"><svg class="ic me-1"><use href="#bird"/></svg>ItemCreated Event</a>
    <a class="tb ms-2" href="#"><svg class="ic me-1"><use href="#twc"/></svg>Crawley Weather Forecast...</a>
    <a class="tb ms-2" href="#"><svg class="ic me-1"><use href="#twc"/></svg>Arundel Weather Forecast...</a>
    <a class="tb ms-2 text-secondary" href="#"><svg class="ic me-1"><use href="#ie"/></svg>Suggested Sites<i class="car ms-1"></i></a>
    <a class="tb ms-2 text-secondary" href="#"><svg class="ic me-1"><use href="#pageie"/></svg>Web Slice Gallery<i class="car ms-1"></i></a>
  </nav>
  <div class="tabs flex-shrink-0">
    <div class="tabline d-flex ps-2">
      <div class="tabon d-flex align-items-center ps-1" style="width:297px"><svg class="ic me-1"><use href="#ie"/></svg>Dashboard</div>
      <div class="tabnew"></div>
      <div class="cmd d-flex align-items-center ms-auto pe-1"></div>
    </div>
    <div class="tabstrip"></div>
  </div>

  <section class="page d-flex flex-grow-1 pane overflow-hidden">
    <aside class="side flex-shrink-0">
      <div class="sidebox"></div>
      <nav class="sidemenu arial" id="sidemenu"></nav>
      <div class="broken d-flex align-items-center justify-content-center"><svg width="14" height="16"><path d="M.5.500h13v15H.5z" fill="#fff" stroke="#bbb"/><path d="M4 5l6 6M10 5l-6 6" stroke="#cc2222" stroke-width="2"/></svg></div>
    </aside>
    <div class="flex-grow-1 pane me-1">
      <div class="cal">
        <div class="calview d-flex">
          <div class="hours flex-grow-1" id="hours"></div>
          <div class="sbar"><div class="thumb d-flex align-items-center justify-content-center" style="height:96px"><i class="grip"></i></div></div>
        </div>
        <div class="calfoot d-flex align-items-center"><svg width="8" height="16"><use href="#chv"/></svg>Show 24 hours...</div>
      </div>
      <p class="arial caption-line">Baseline vs rota matrix</p>
      <div class="rgrid">
        <div class="bar top-bar d-flex align-items-center justify-content-between"><button><svg class="ic"><use href="#plus"/></svg>Add new record</button><button><svg class="ic"><use href="#rfr"/></svg>Refresh</button></div>
        <table class="gtab">
          <colgroup><col span="7"><col style="width:118px"></colgroup>
          <thead>
            <tr><th>Shift date</th><th>Day</th><th>Start</th><th>End</th><th>Requirement</th><th>Actual</th><th>Difference</th><th>Manager Shift?</th></tr>
            <tr class="filt" id="filt"></tr>
          </thead>
          <tbody id="rows"></tbody>
        </table>
        <div class="bar d-flex align-items-center justify-content-between"><button><svg class="ic"><use href="#plus"/></svg>Add new record</button><button><svg class="ic"><use href="#rfr"/></svg>Refresh</button></div>
        <div class="pager d-flex align-items-center">
          <button aria-label="First"><svg width="10" height="12"><path d="M1.500 1v10M9 1L4 6l5 5" fill="none" stroke="#14304a" stroke-width="2"/></svg></button>
          <button class="ms-3 me-2" aria-label="Previous"><svg width="7" height="12"><path d="M6 1L1.500 6 6 11" fill="none" stroke="#14304a" stroke-width="2"/></svg></button>
          <button class="pg">1</button><button class="fw-semibold ms-1">2</button>
          <button class="ms-3" aria-label="Next"><svg width="7" height="12"><path d="M1 1l4.500 5L1 11" fill="none" stroke="#14304a" stroke-width="2"/></svg></button>
          <button class="ms-3" aria-label="Last"><svg width="10" height="12"><path d="M8.500 1v10M1 1l5 5-5 5" fill="none" stroke="#14304a" stroke-width="2"/></svg></button>
          <label class="ms-4 me-1" for="ps">Page size:</label><select id="ps" class="psize"><option>10</option></select>
          <span class="ms-auto" style="color:#4d5f78"><span class="text-black">18</span> items in <span class="text-black">2</span> pages</span>
        </div>
      </div>
      <div class="foot arial text-end">Servizio v2.0.0 - Intouch Business © 2009</div>
      <div class="text-end"><svg class="w3c d-inline-block" viewBox="0 0 85 31" role="img" aria-label="W3C XHTML 1.0"><path d="M.5.500h84v30H.5z" fill="#fff" stroke="#8a8f94"/><path d="M37 1h47v29H37z" fill="#b0cad8"/><text x="3" y="21" font-size="15" font-family="Liberation Sans,sans-serif" fill="#005a9c">W3<tspan fill="#222">C</tspan></text><text x="40" y="13" font-size="10" font-weight="bold" font-family="DejaVu Sans,sans-serif">XHTML</text><text x="40" y="25" font-size="10" font-weight="bold" font-family="DejaVu Sans,sans-serif">1.0</text><path d="M68 20l5 7 12-14" fill="none" stroke="#005a9c" stroke-width="4"/></svg></div>
    </div>
    <div class="sbar d-flex flex-column align-items-center justify-content-between py-1"><i class="carup mt-1"></i><div class="thumb w-100 mt-auto mb-2 d-flex align-items-center justify-content-center" style="height:520px"><i class="grip"></i></div><i class="car mt-1 mb-1"></i></div>
  </section>

  <div class="stat d-flex align-items-center flex-shrink-0">
    <div class="d-flex ms-auto align-self-stretch"><i class="vsep"></i><i class="vsep"></i><i class="vsep"></i><i class="vsep"></i><i class="vsep"></i><i class="vsep"></i></div>
    <svg class="ic me-1 ms-1"><use href="#glb"/></svg><span>Local intranet | Protected Mode: Off</span>
    <svg class="ic" style="margin-left:66px"><use href="#lock"/></svg><i class="car mx-2"></i>
    <svg class="ic ms-2"><use href="#mag"/></svg>100%<i class="car ms-3 me-4"></i>
  </div>

  <footer class="task d-flex align-items-center flex-shrink-0">
    <button class="start" aria-label="Start"><svg width="42" height="34" viewBox="0 0 42 34"><ellipse cx="21" cy="18" rx="20" ry="17" fill="url(#gStart)" stroke="#7f98ab"/><path d="M12 12q4-3 8-1v7q-4-2-8 0z" fill="#f0592b"/><path d="M21.500 11q4 2 8 0v7q-4 2-8 0z" fill="#8cc63e"/><path d="M11 20q4-3 8-1v7q-4-2-8 0z" fill="#3f9be8"/><path d="M21 19.500q4 2 8 0v7q-4 2-8 0z" fill="#fbc52d"/></svg></button>
    <svg class="ic"><use href="#dsk"/></svg><svg class="ic ms-2"><use href="#swt"/></svg><svg class="ic ms-2"><use href="#olk"/></svg>
    <span class="ms-3 fs-6 mb-2 me-2">»</span>
    <div class="d-flex gap-1">
      <button class="tbtn"><svg class="ic"><use href="#xls"/></svg>Microsoft Excel - 20...</button>
      <button class="tbtn"><svg class="ic"><use href="#olk"/></svg>Inbox - Microsoft O...</button>
      <button class="tbtn"><svg class="ic"><use href="#svz"/></svg>servizio_cpsd_stagin...</button>
      <button class="tbtn act"><svg class="ic"><use href="#ie"/></svg>Dashboard - Windo...</button>
      <button class="tbtn"><svg class="ic"><use href="#ie"/></svg>New Forum Thread ...</button>
      <button class="tbtn"><svg class="ic"><use href="#pnt"/></svg>Problem UI - Paint</button>
    </div>
    <div class="d-flex align-items-center ms-auto pe-2 me-1 gap-1"><span class="fs-6 me-1">‹</span><svg class="ic"><use href="#tr1"/></svg><svg class="ic"><use href="#ati"/></svg><svg class="ic"><use href="#per"/></svg><svg class="ic me-2"><use href="#olk"/></svg><svg class="ic"><use href="#net"/></svg><svg class="ic"><use href="#spk"/></svg><span>09:43</span></div>
  </footer>
</main>

<!-- ============ Mail client ============ -->
<section class="ol w-50 d-flex flex-column pane">
  <div class="oltitle d-flex align-items-center flex-shrink-0"><svg class="ic"><use href="#olk"/></svg><span>Inbox - Microsoft Outlook</span>
    <div class="wctl d-flex ms-auto me-1"><button aria-label="Minimize"><svg width="12" height="12"><use href="#min"/></svg></button><button aria-label="Restore"><svg width="12" height="12"><use href="#rest"/></svg></button><button aria-label="Close"><svg width="11" height="11"><use href="#cls"/></svg></button></div>
  </div>
  <div class="olmenu d-flex align-items-center flex-shrink-0">
    <button><u>F</u>ile</button><button><u>E</u>dit</button><button><u>V</u>iew</button><button><u>G</u>o</button><button><u>T</u>ools</button><button><u>A</u>ctions</button><button><u>H</u>elp</button>
    <div class="d-flex align-items-center ms-auto bg-white" style="height:20px;width:178px;margin-right:3px"><input class="border-0 flex-grow-1 p-0 ps-1" type="text" placeholder="Type a question for help" aria-label="Help question"><i class="car sm mx-1"></i></div>
  </div>
  <div class="d-flex flex-shrink-0 pb-1">
    <div class="oltools d-flex align-items-center">
      <i class="dots align-self-stretch my-1"></i>
      <button class="gap-1"><svg class="ic"><use href="#newm"/></svg><span><u>N</u>ew</span></button><i class="car sm"></i><i class="vsep"></i>
      <button aria-label="Print"><svg class="ic"><use href="#print"/></svg></button><button aria-label="Move"><svg class="ic"><use href="#movef"/></svg></button><button aria-label="Delete"><svg class="ic"><use href="#xdel"/></svg></button><i class="vsep"></i>
      <button><svg class="ic"><use href="#mreply"/></svg><span><u>R</u>eply</span></button>
      <button><svg class="ic"><use href="#mreply"/></svg><span>Reply to A<u>l</u>l</span></button>
      <button><svg class="ic"><use href="#mfwd"/></svg><span>For<u>w</u>ard</span></button><i class="vsep"></i>
      <button aria-label="Categorize"><svg class="ic"><use href="#cats"/></svg></button><button aria-label="Follow up"><svg class="ic"><use href="#rflag"/></svg></button><i class="vsep"></i>
      <button aria-label="Send to OneNote"><svg class="ic"><use href="#onen"/></svg></button><i class="vsep"></i>
      <button><svg class="ic"><use href="#sr"/></svg><span>Send/Re<u>c</u>eive</span></button><i class="car sm"></i>
      <button aria-label="Open"><svg class="ic"><use href="#opn"/></svg></button><i class="vsep"></i>
      <button aria-label="Address book"><svg class="ic"><use href="#book"/></svg></button>
      <div class="d-flex align-items-center bg-white" style="height:20px;width:166px"><input class="border-0 flex-grow-1 p-0 ps-1" type="text" placeholder="Search address books" aria-label="Search address books"><i class="car sm mx-1"></i></div>
      <button aria-label="Help"><svg class="ic"><use href="#help"/></svg></button>
      <span class="d-flex align-items-end align-self-stretch px-1 pb-1" style="background:#a3c3f0"><i class="car sm"></i></span>
    </div>
  </div>

  <div class="olbody d-flex flex-grow-1 pane">
    <!-- navigation pane -->
    <aside class="olpane d-flex flex-column flex-shrink-0" style="width:165px">
      <div class="phead d-flex align-items-center justify-content-between px-2">Mail<span class="fw-normal">«</span></div>
      <div class="sub d-flex align-items-center justify-content-between">Favorite Folders<svg width="10" height="10"><use href="#dblup"/></svg></div>
      <div class="fav-rows py-1 flex-shrink-0">
        <div class="frow d-flex align-items-center"><svg class="ic"><use href="#inbox"/></svg><b>Inbox</b><span class="blue">(1)</span></div>
        <div class="frow d-flex align-items-center fst-italic"><svg class="ic"><use href="#unread"/></svg>Unread Mail</div>
        <div class="frow d-flex align-items-center"><svg class="ic"><use href="#sent"/></svg>Sent Items</div>
      </div>
      <div class="sub d-flex align-items-center justify-content-between" style="border-top:1px solid #6f97d1">Mail Folders<svg width="10" height="10"><use href="#dblup"/></svg></div>
      <button class="d-flex flex-shrink-0 fw-semibold ps-1 pe-1 border-bottom gap-1" style="height:25px"><svg class="ic"><use href="#allm"/></svg>All Mail Items<i class="car ms-auto"></i></button>
      <div class="flex-grow-1 overflow-hidden pt-1" id="tree"></div>
      <div class="d-flex justify-content-center align-items-center" style="height:8px;border-top:1px solid #5e86c1;background:#c9dffc"><i style="width:20px;height:2px;background:repeating-linear-gradient(90deg,#6f93cb 0 2px,transparent 2px 4px)"></i></div>
      <button class="navb on d-flex"><svg><use href="#mopen"/></svg>Mail</button>
      <button class="navb d-flex"><svg><use href="#cale"/></svg>Calendar</button>
      <button class="navb d-flex"><svg><use href="#cont"/></svg>Contacts</button>
      <button class="navb d-flex"><svg><use href="#tsk"/></svg>Tasks</button>
      <div class="navb d-flex align-items-center justify-content-end pe-1"><svg class="ic"><use href="#note"/></svg><svg class="ic"><use href="#fold"/></svg><svg class="ic"><use href="#shortc"/></svg><i class="car sm mx-1"></i></div>
    </aside>

    <!-- message list -->
    <section class="olpane d-flex flex-column flex-shrink-0" style="width:317px">
      <div class="phead d-flex align-items-center px-1"><svg class="ic me-2"><use href="#inbox"/></svg>Inbox</div>
      <div class="d-flex align-items-center flex-shrink-0 ps-1" style="height:26px;background:#dfebfc">
        <div class="d-flex align-items-center bg-white flex-grow-1" style="height:20px;border:1px solid #8aaad8"><input class="border-0 flex-grow-1 p-0 ps-1" type="text" placeholder="Search Inbox" aria-label="Search Inbox"><svg class="ic"><use href="#mag"/></svg><i class="car mx-1"></i></div>
        <svg class="mx-2" width="10" height="10"><use href="#dbldn"/></svg>
      </div>
      <div class="d-flex flex-grow-1 pane">
        <div class="flex-grow-1 overflow-hidden pane">
          <div class="d-flex align-items-center px-1" style="height:22px;background:linear-gradient(#f1f6fe,#cfe1fb);border:1px solid #7ea3d8;border-left:0"><span class="flex-grow-1">Arranged By: Date</span><i class="vsep my-1 me-1" style="background:#9dbbe6"></i><span>Newest on top</span><i class="car ms-4" style="border-top-color:#8fb4ea"></i></div>
          <div id="mails"></div>
        </div>
        <div class="sbar blu d-flex flex-column align-items-center py-1"><i class="carup mb-1 mt-1"></i><div class="thumb w-100 d-flex align-items-center justify-content-center" style="height:154px"><i class="grip"></i></div><i class="car mt-auto mb-1"></i></div>
      </div>
    </section>

    <!-- reading pane -->
    <article class="olpane reading d-flex flex-column flex-grow-1 pane">
      <h1 class="subject">RE: Current status</h1>
      <div class="sender">ashok rangasamy</div>
      <div class="meta">
        <div class="d-flex"><span class="lbl">Sent:</span>Mon 25/01/2010 08:59</div>
        <div class="d-flex"><span class="lbl">To:</span>gareth webb</div>
        <div class="d-flex"><span class="lbl">Cc:</span>Phanindra Musale; Robert Smith</div>
      </div>
      <div class="d-flex flex-grow-1 pane pt-1">
        <div class="mbody flex-grow-1 overflow-hidden pane">
          <p class="answer">Changes are being made to the database and the code files. Code file changes haven’t been moved to the staging site yet and therefore the error message.</p>
          <div class="sig arial">Ashok Rangasamy
Intouch Business Ltd
Old Bank House, 1 High Street
Arundel, West Sussex BN18 9AD
t:   0844 858 4002 (inside UK)
      +44 (0)1903 885900 (outside UK)
e:  <a href="#">ashok.rangasamy@intouch-business.com</a>
w: <a href="#">http://www.intouch-business.com/</a></div>
          <div class="fwdhead"><b>From:</b> gareth webb<br><b>Sent:</b> Sunday, January 24, 2010 5:06 PM<br><b>To:</b> ashok rangasamy<br><b>Cc:</b> Phanindra Musale; Robert Smith<br><b>Subject:</b> Current status</div>
          <div class="quoted">Ash<br><br>Can’t login to test the finished grid – are you building the syetm? The grid is finished isn’t it?<br><br>G</div>

          <div class="inner">
            <div class="chrome">
              <div class="ttl d-flex align-items-center"><svg class="ic"><use href="#ie"/></svg><span class="flex-grow-1">Procedure or Function 'rota_grid_get_today' expects parameter '@id', which was not supplied. - Windows Internet Explorer</span>
                <div class="wctl d-flex me-1"><button aria-label="Minimize"><svg width="12" height="12"><use href="#min"/></svg></button><button aria-label="Restore"><svg width="12" height="12"><use href="#rest"/></svg></button><button aria-label="Close"><svg width="11" height="11"><use href="#cls"/></svg></button></div></div>
              <div class="d-flex align-items-center ps-1">
                <button class="orb" aria-label="Back"><svg class="ic"><use href="#arrL"/></svg></button><button class="orb ms-1" aria-label="Forward"><svg class="ic"><use href="#arrR"/></svg></button><i class="car sm mx-2" style="border-top-color:#a9c2e4"></i>
                <div class="addr d-flex align-items-center flex-grow-1 ms-1 ps-1"><svg class="ic"><use href="#pageie"/></svg><span class="ms-1 flex-grow-1">http://servizio-cpsd-staging.<span class="text-black">intouch-business.com</span>/</span><svg width="20" height="20"><path d="M0 0h20v20H0z" fill="#8f9a86"/><path d="M4 20q4-10 16-8v8z" fill="#eef0ec"/></svg><i class="car ms-2 me-1"></i>
                  <button class="gobtn ms-1" aria-label="Compatibility"><svg class="ic"><use href="#compat"/></svg></button><button class="gobtn" aria-label="Refresh"><svg class="ic"><use href="#reload"/></svg></button><button class="gobtn" aria-label="Stop"><svg class="ic"><use href="#stop"/></svg></button></div>
                <div class="addr d-flex align-items-center ms-2 ps-1" style="width:297px"><svg class="ic"><use href="#ggl"/></svg><input class="border-0 bg-transparent flex-grow-1 ms-1 p-0 fst-italic" type="text" placeholder="Google" aria-label="Google"><svg class="ic me-2"><use href="#mag"/></svg><i class="car me-1"></i></div>
              </div>
            </div>
            <div class="imenu d-flex align-items-center"><button>File</button><button>Edit</button><button>View</button><button>Favorites</button><button>Tools</button><button>Help</button></div>
            <div class="favs d-flex align-items-center ps-2">
              <a class="tb" href="#"><svg class="ic me-1"><use href="#star"/></svg>Favorites</a><i class="vsep my-1 ms-3 me-2" style="background:#a9b6c6"></i>
              <button aria-label="Add to favorites"><svg class="ic me-2"><use href="#staradd"/></svg></button>
              <a class="tb" href="#"><svg class="ic me-1"><use href="#pageie"/></svg>Dashboard</a>
              <a class="tb ms-2" href="#"><svg class="ic me-1"><use href="#bbc"/></svg>BBC Weather&nbsp; Chichester</a>
              <a class="tb ms-2" href="#"><svg class="ic me-1"><use href="#rail"/></svg>National Rail Enquiries - O...</a>
            </div>
            <div class="tabs"><div class="tabline d-flex align-items-end ps-2">
              <div class="itab d-flex align-items-center" style="width:37px"><svg class="ic"><use href="#qtab"/></svg><i class="car sm"></i></div>
              <div class="itab d-flex align-items-center"><svg class="ic"><use href="#ie"/></svg><span class="clip">Login - Servizio Informatio...</span></div>
              <div class="tabon d-flex align-items-center"><svg class="ic"><use href="#ie"/></svg><span class="clip">Procedure or Function '...</span><span class="ms-auto text-secondary fw-bold">X</span></div>
              <div class="tabnew"></div>
              <div class="cmd d-flex align-items-center ms-auto pe-1 align-self-center"></div>
            </div><div class="tabstrip"></div></div>
            <div class="iview d-flex">
              <div class="err flex-grow-1 verd">
                <h1>Server Error in '/' Application.</h1>
                <h2>Procedure or Function 'rota_grid_get_today' expects parameter '@id', which was not supplied.</h2>
                <p><b>Description:</b> <span class="arial">An unhandled exception occurred during the execution of the current web request. Please review the stack trace for more information about the error and where it originated in the code.</span></p>
                <p><b>Exception Details:</b> <span class="arial">System.Data.SqlClient.SqlException: Procedure or Function 'rota_grid_get_today' expects parameter '@id', which was not supplied.</span></p>
                <p><b>Source Error:</b></p>
                <pre>An unhandled exception was generated during the execution of the current web request. Information regarding the origin and location of the exception can be
identified using the exception stack trace below.</pre>
                <p><b>Stack Trace:</b></p>
                <pre></pre>
              </div>
              <div class="sbar d-flex flex-column align-items-center pt-1"><i class="carup mt-1 mb-2"></i><div class="thumb w-100 flex-grow-1 d-flex align-items-center justify-content-center"><i class="grip"></i></div></div>
            </div>
          </div>
        </div>
        <div class="sbar blu d-flex flex-column align-items-center py-1"><i class="carup mb-1 mt-1"></i><div class="thumb w-100 d-flex align-items-center justify-content-center" style="height:457px"><i class="grip"></i></div><i class="car mt-auto mb-1"></i></div>
      </div>
    </article>
  </div>

  <footer class="olstat d-flex align-items-center flex-shrink-0 px-1">140 Items<i class="vsep ms-3" style="background:#8db1e3"></i>
    <span class="ms-auto">All folders are up to date.</span><i class="vsep mx-1" style="background:#8db1e3"></i><svg class="ic me-2"><use href="#xch"/></svg><span>Connected to Microsoft Exchange</span><i class="car sm ms-1 me-4"></i></footer>
</section>
</div>

<script src="https://cdn.jsdelivr.net/npm/bootstrap@5.3.0/dist/js/bootstrap.bundle.min.js"></script>
<script>
  const $ = s => document.querySelector(s);
  const icon = (n, c = 'ic') => `<svg class="${c}"><use href="#${n}"/></svg>`;

  document.querySelectorAll('.cmd').forEach(el => el.append($('#cmdTpl').content.cloneNode(true)));

  $('#sidemenu').innerHTML = ['People', 'Areas', 'Groups', 'Rota', 'Swaps', 'Manager Tasks', 'Reports', 'Admin']
    .map((t, i) => `<a href="#" class="d-flex align-items-start">${icon('o' + (i + 1), '')}${t}</a>`).join('');

  $('#hours').innerHTML = [6, 7, 8, 9, 10, 11, '']
    .map(h => `<div class="hour d-flex"><div class="lab">${h ? h + '<sup>am</sup>' : ''}</div><div class="slot flex-grow-1"></div></div>`).join('');

  const filters = ['NoFilter', 'Contains', 'DoesNotContain', 'StartsWith', 'EndsWith', 'EqualTo', 'NotEqualTo', 'GreaterThan', 'LessThan',
    'GreaterThanOrEqualTo', 'LessThanOrEqualTo', 'Between', 'NotBetween', 'IsEmpty', 'NotIsEmpty', 'IsNull', 'NotIsNull'];
  const cols = ['Shift date', 'Day', 'Start', 'End', 'Requirement', 'Actual', 'Difference'];
  const funnel = '<svg width="12" height="12"><use href="#funnel"/></svg>';
  $('#filt').innerHTML = cols.map((c, i) => `<td class="${i === 1 ? 'position-relative' : ''}"><div class="d-flex align-items-center gap-2">
      <input type="text" aria-label="${c} filter"><button class="${i === 1 ? 'focus-dots' : ''}" aria-label="Filter ${c}">${funnel}</button></div>
      ${i === 1 ? `<div class="fmenu position-absolute">${filters.map((f, k) => `<button class="${k ? '' : 'hot'}">${f}</button>`).join('')}</div><div class="ftip position-absolute">Filter</div>` : ''}</td>`).join('')
    + `<td><div class="d-flex align-items-center gap-2"><input type="checkbox" aria-label="Manager Shift filter"><button aria-label="Filter Manager Shift">${funnel}</button></div></td>`;

  $('#rows').innerHTML = [[0, 0], [2, 0], [2, 0], [18, 18], [6, 6], [5, 5], [3, 3], [1, 1], [5, 5], [0, 0]]
    .map(([r, a]) => `<tr><td>25/01/2010 00:00:00</td><td>Monday</td><td></td><td>0:00</td><td>${r}</td><td>${a}</td><td>0</td>
      <td><input type="checkbox" aria-label="Manager shift" disabled></td></tr>`).join('');

  const tree = [['mbox', 'Mailbox - Phanindra Musale', 0, '-'], ['bin', 'Deleted Items', 1], ['drafts', 'Drafts', 1],
    ['inbox', '<b>Inbox</b> <span class="blue">&nbsp;(1)</span>', 1], ['junk', 'Junk E-mail', 1], ['outb', 'Outbox', 1],
    ['fold', 'Performance', 1, '-'], ['fold', 'Appreciation', 2], ['feeds', 'RSS Feeds', 1], ['sent', 'Sent Items', 1], ['sfold', 'Search Folders', 1, '+']];
  $('#tree').innerHTML = tree.map(([ic, t, d, e]) => `<div class="frow d-flex align-items-center" style="padding-left:${6 + d * 17}px">
      <i class="${e ? 'pm' : ''} ${e === '+' ? 'plus' : ''}" style="margin-right:${e ? 3 : 12}px"></i>${icon(ic)}<span>${t}</span></div>`).join('');

  const mails = ['#Today', ['mclosed', 'ashok rangasamy', '08:57', 'RE: Current status', 1], '#Yesterday', ['mopen', 'gareth webb', 'Sun 17:04', 'Current status'],
    '#Last Week', ['mopen', 'gareth webb', 'Sat 23/01', 'Remote Desktop Activate Windows'], ['mreply', 'Robert Smith', 'Fri 22/01', 'Servizio grid', 0, 1],
    ['mreply', 'Robert Smith', 'Fri 22/01', 'RE: Servizio Grid considerations'], ['mopen', 'Matthew Mowels', 'Fri 22/01', 'CSS'],
    ['mreply', 'Robert Smith', 'Fri 22/01', 'Servizio Grid considerations'], ['mopen', 'Jeffrey Martin', 'Fri 22/01', 'RE: Roll-call!'],
    ['mopen', 'Robert Smith', 'Fri 22/01', 'roll-call'], ['mopen', 'gareth webb', 'Thu 21/01', 'RE: Ketki in action'],
    ['mfwd', 'gareth webb', 'Thu 21/01', 'FW: Ketki in action', 0, 1], ['mopen', 'Robert Smith', 'Thu 21/01', 'RE: "Add New Record" buttons on grids'],
    ['mopen', 'phil selley', 'Thu 21/01', '"Add New Record" buttons on grids'], ['mopen', 'Robert Smith', 'Thu 21/01', 'RE: Serviziogrid'],
    ['mopen', 'Matthew Mowels', 'Thu 21/01', 'RE: roll -call'], ['mopen', 'Robert Smith', 'Thu 21/01', 'roll-call'],
    ['mopen', 'Jeffrey Martin', 'Thu 21/01', 'RE: Roll-call!'], ['mopen', 'gareth webb', 'Wed 20/01', 'RE: Serviziogrid'],
    ['mopen', 'Matt Wadsley', 'Wed 20/01', 'rugby photos'], ['mopen', 'phil selley', 'Wed 20/01', 'RE: Standard suite of tester logons for serv...'],
    ['mopen', 'Matt Wadsley', 'Wed 20/01', 'RE: Standard suite of tester logons for serv...'], ['mopen', 'phil selley', 'Wed 20/01', 'FW: Standard suite of tester logons for ser...'],
    ['mopen', 'Matthew Mowels', 'Wed 20/01', '']];
  $('#mails').innerHTML = mails.map(m => typeof m === 'string'
    ? `<div class="ghead d-flex"><i class="pm mt-1"></i>${m.slice(1)}</div>`
    : `<div class="mitem d-flex ${m[4] ? 'sel' : ''}">${icon(m[0])}<div class="flex-grow-1 pane">
        <div class="d-flex justify-content-between ${m[4] ? 'fw-bold' : ''}"><span>${m[1]}</span><span>${m[2]}</span></div>
        <div class="d-flex justify-content-between subj"><span class="clip">${m[3]}</span>${m[5] ? '<svg width="8" height="12" class="flex-shrink-0"><use href="#clipi"/></svg>' : ''}</div></div>
        <div class="flagcol d-flex"><input type="checkbox" class="tick" aria-label="Category">${icon('flg')}</div></div>`).join('');
</script>
</body>
</html>
